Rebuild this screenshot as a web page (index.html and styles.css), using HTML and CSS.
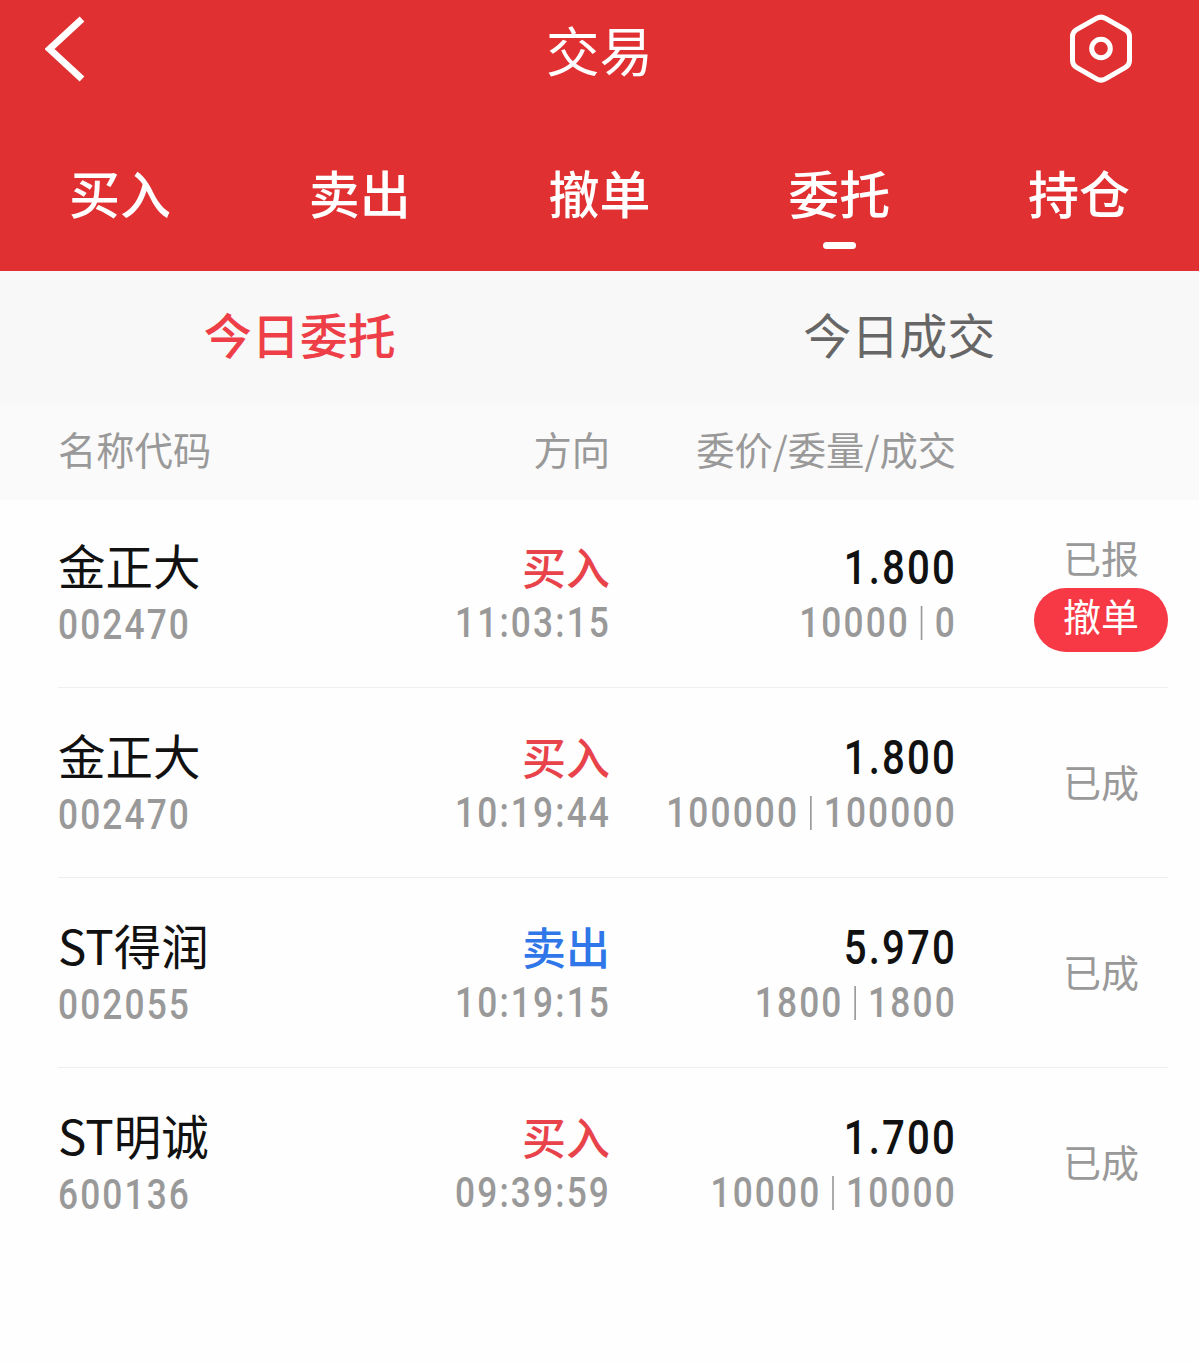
FILE: index.html
```html
<!DOCTYPE html>
<html lang="zh-CN">
<head>
  <meta charset="UTF-8" />
  <title>交易</title>
  <meta name="viewport" content="width=device-width, initial-scale=1.0" />
  <link rel="stylesheet" href="styles.css">
</head>
<body>
  <header class="header">
    <div class="title-bar">
      <svg class="back-icon" viewBox="0 0 40 66">
        <path d="M37 3 L4.500 33 L37 63" />
      </svg>
      <h1>交易</h1>
      <svg class="setting-icon" viewBox="0 0 64 70">
        <path d="M27.500 4.400 Q32 1.800 36.500 4.400 L56.500 15.700 Q60.500 18 60.500 22.500 V46.500 Q60.500 51 56.500 53.300 L36.500 64.800 Q32 67.400 27.500 64.800 L7.500 53.300 Q3.500 51 3.500 46.500 V22.500 Q3.500 18 7.500 15.700 Z" />
        <circle cx="32" cy="34.500" r="9.300" />
      </svg>
    </div>
    <nav class="tabs">
      <a class="tab">买入</a>
      <a class="tab">卖出</a>
      <a class="tab">撤单</a>
      <a class="tab active">委托</a>
      <a class="tab">持仓</a>
    </nav>
  </header>

  <div class="sub-tabs">
    <a class="sub-tab active">今日委托</a>
    <a class="sub-tab">今日成交</a>
  </div>

  <div class="list-head">
    <span>名称代码</span>
    <span class="right">方向</span>
    <span class="right">委价/委量/成交</span>
  </div>

  <div class="order-list">
    <div class="order">
      <div class="stock">
        <div class="name">金正大</div>
        <div class="code">002470</div>
      </div>
      <div class="side">
        <div class="direction buy">买入</div>
        <div class="time">11:03:15</div>
      </div>
      <div class="deal">
        <div class="price">1.800</div>
        <div class="amount"><span>10000</span><i class="sep"></i><span>0</span></div>
      </div>
      <div class="status pending">
        <span>已报</span>
        <button class="cancel-btn">撤单</button>
      </div>
    </div>

    <div class="order">
      <div class="stock">
        <div class="name">金正大</div>
        <div class="code">002470</div>
      </div>
      <div class="side">
        <div class="direction buy">买入</div>
        <div class="time">10:19:44</div>
      </div>
      <div class="deal">
        <div class="price">1.800</div>
        <div class="amount"><span>100000</span><i class="sep"></i><span>100000</span></div>
      </div>
      <div class="status"><span>已成</span></div>
    </div>

    <div class="order">
      <div class="stock">
        <div class="name">ST得润</div>
        <div class="code">002055</div>
      </div>
      <div class="side">
        <div class="direction sell">卖出</div>
        <div class="time">10:19:15</div>
      </div>
      <div class="deal">
        <div class="price">5.970</div>
        <div class="amount"><span>1800</span><i class="sep"></i><span>1800</span></div>
      </div>
      <div class="status"><span>已成</span></div>
    </div>

    <div class="order">
      <div class="stock">
        <div class="name">ST明诚</div>
        <div class="code">600136</div>
      </div>
      <div class="side">
        <div class="direction buy">买入</div>
        <div class="time">09:39:59</div>
      </div>
      <div class="deal">
        <div class="price">1.700</div>
        <div class="amount"><span>10000</span><i class="sep"></i><span>10000</span></div>
      </div>
      <div class="status"><span>已成</span></div>
    </div>
  </div>
</body>
</html>
```
FILE: styles.css
```css
* {
  box-sizing: border-box;
}

body {
  margin: 0;
  font-family: "Noto Sans CJK SC", sans-serif;
  background: #fefefe;
  color: #111;
}

.header {
  height: 271px;
  background: #e03032;
  color: #fff;
}

.title-bar {
  display: grid;
  grid-template-columns: 85px 1fr 88px;
  align-items: center;
  height: 98px;
  padding: 0 42px 0 45px;
}

.title-bar h1 {
  margin: 0;
  font-size: 53.500px;
  font-weight: 400;
  line-height: 98px;
  text-align: center;
}

.title-bar svg {
  fill: none;
  stroke: #fff;
}

.back-icon {
  width: 40px;
  height: 66px;
  stroke-width: 7;
}

.setting-icon {
  width: 64px;
  height: 70px;
  stroke-width: 5;
}

.tabs {
  display: flex;
  height: 173px;
  padding-top: 48px;
}

.tab {
  flex: 1;
  display: flex;
  flex-direction: column;
  align-items: center;
  font-size: 51px;
  font-weight: 500;
  line-height: 92px;
}

.tab.active::after {
  content: '';
  width: 33px;
  height: 7px;
  margin-top: 4px;
  border-radius: 4px;
  background: #fff;
}

.sub-tabs {
  display: flex;
  height: 133px;
  background: #f8f8f8;
}

.sub-tab {
  flex: 1;
  text-align: center;
  font-size: 48px;
  line-height: 124px;
  color: #666;
}

.sub-tab.active {
  color: #ee3f48;
  font-weight: 500;
}

.list-head,
.order {
  display: grid;
  grid-template-columns: 276px 276px 346px 212px;
}

.list-head {
  height: 96px;
  padding-left: 58px;
  background: #fafafa;
  font-size: 38.300px;
  line-height: 89px;
  color: #999;
}

.right {
  text-align: right;
}

.order-list {
  margin: -2px 31px 0 58px;
}

.order {
  height: 190px;
  border-bottom: 1px solid #eee;
}

.order:last-child {
  border-bottom: none;
}

.stock,
.side,
.deal {
  padding-top: 39px;
}

.side,
.deal {
  text-align: right;
}

.name {
  font-size: 47.500px;
  line-height: 56px;
}

/* narrow digits */
.code,
.time,
.amount,
.price {
  font-family: Roboto, sans-serif;
  font-weight: 500;
  letter-spacing: 2.600px;
  transform: scaleX(0.82);
  transform-origin: right;
}

.code,
.time,
.amount {
  font-size: 43px;
  color: #999;
}

.time,
.price,
.amount span {
  margin-right: -1px;
}

.code {
  line-height: 63px;
  transform-origin: left;
}

.direction {
  font-size: 44px;
  font-weight: 500;
  line-height: 59px;
}

.buy {
  color: #e8434b;
}

.sell {
  color: #2f76e8;
}

.time,
.amount {
  line-height: 53px;
}

.price {
  font-size: 49px;
  line-height: 61px;
  margin-bottom: -2px;
}

.amount {
  display: flex;
  justify-content: flex-end;
  align-items: center;
}

.sep {
  flex-shrink: 0;
  width: 2px;
  height: 34px;
  margin: 0 15px 0 14px;
  background: #999;
}

.status {
  display: flex;
  flex-direction: column;
  align-items: center;
  align-self: center;
  justify-self: end;
  width: 134px;
  margin-bottom: 4px;
  font-size: 38px;
  line-height: 56px;
  color: #999;
}

.status.pending {
  margin-bottom: 9px;
  line-height: 63px;
}

.cancel-btn {
  width: 134px;
  height: 64px;
  padding: 0 0 10px;
  border: none;
  border-radius: 32px;
  background: #f73845;
  color: #fff;
  font-family: inherit;
  font-size: 38px;
  line-height: 54px;
}
```
